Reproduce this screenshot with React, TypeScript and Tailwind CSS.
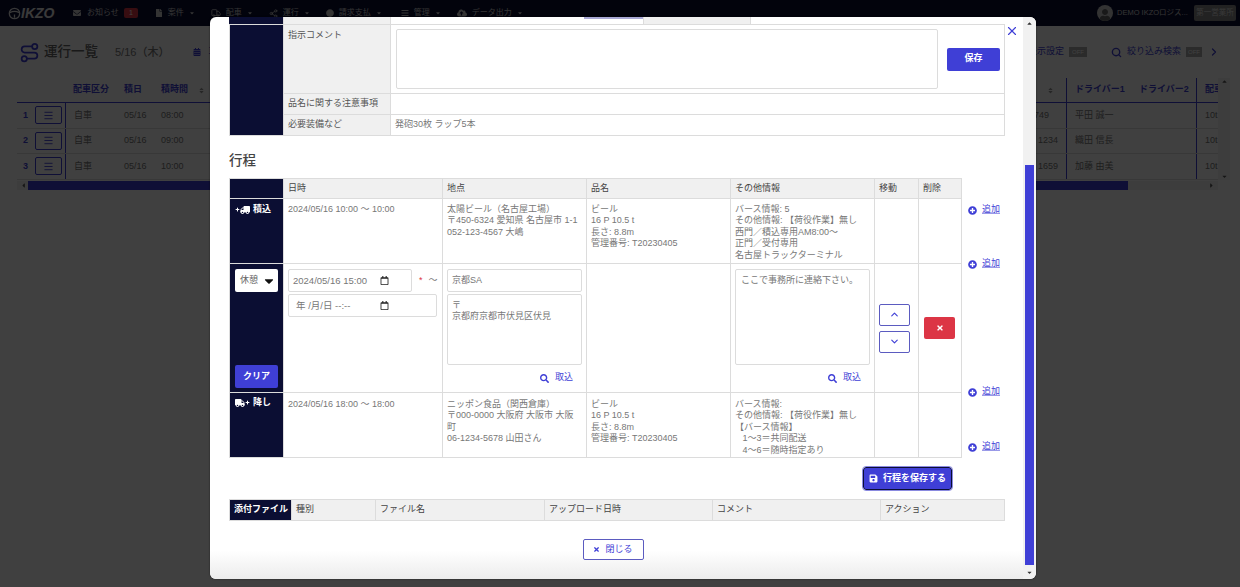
import React from "react";
import { Truck, Share2, Menu, ChevronDown, ChevronUp, ChevronRight, Search, X, Plus, Route } from "lucide-react";
import { FaCaretDown, FaCaretUp, FaCaretLeft, FaCaretRight, FaPlusCircle, FaTruck, FaSave, FaTimes, FaUser, FaBars, FaRegCalendar, FaSearch, FaFile, FaEnvelope, FaCircle, FaCloudUploadAlt, FaCalendarAlt, FaSort } from "react-icons/fa";

const font = "[font-family:'Liberation_Sans','Noto_Sans_CJK_JP',sans-serif]";

const nav = [
  { icon: <FaFile size={8} />, label: "案件", cls: "" },
  { icon: <Truck size={10} />, label: "配車", cls: "" },
  { icon: <Share2 size={9} />, label: "運行", cls: "" },
  { icon: <FaCircle size={8} />, label: "請求支払", cls: "mr-[3px]" },
  { icon: <FaBars size={8} />, label: "管理", cls: "" },
  { icon: <FaCloudUploadAlt size={10} />, label: "データ出力", cls: "" },
];

const bgRows = [
  { n: 1, t: "08:00", num: "749", d: "平田 誠一", pr: "pr-[17px]" },
  { n: 2, t: "09:00", num: "1234", d: "織田 信長", pr: "pr-[8px]" },
  { n: 3, t: "10:00", num: "1659", d: "加藤 由美", pr: "pr-[8px]" },
];

function Background() {
  return (
    <div className="bg-white text-[#777777]">
      <header className="h-[26px] bg-[#0b0e33] flex items-center text-[#cfcfcf] text-[8px]">
        <div className="ml-[8px] w-[46px] flex items-center gap-[0px]">
          <svg width="13" height="13" viewBox="0 0 14 14" fill="none" stroke="#ddd" strokeWidth="1.4" className="shrink-0"><circle cx="7" cy="7" r="5.6" /><path d="M2 6c3-1.6 7-1.6 10 0M7 8v3.5" /></svg>
          <span className="text-[14px] leading-none font-bold italic text-[#e6e6e6]">IKZO</span>
        </div>
        <div className="ml-[19px] flex items-center gap-[4px]">
          <FaEnvelope size={8} />
          <span className="ml-[2px]">お知らせ</span>
          <span className="ml-[1px] w-[14px] h-[10px] rounded-[2px] bg-[#dc3545] text-white text-[7px] flex items-center justify-center">1</span>
        </div>
        <nav className="ml-[17px] flex items-center gap-[16px]">
          {nav.map((n) => (
            <div key={n.label} className={`flex items-center gap-[5px] ${n.cls}`}>
              {n.icon}
              <span>{n.label}</span>
              <FaCaretDown size={6} />
            </div>
          ))}
        </nav>
        <div className="ml-auto flex items-center">
          <span className="w-[16px] h-[16px] rounded-full bg-[#cccccc] flex items-end justify-center overflow-hidden text-[#666666]"><FaUser size={12} /></span>
          <span className="ml-[4px] text-[7.5px] w-[72px] whitespace-nowrap">DEMO IKZOロジス...</span>
          <span className="ml-[5px] mr-[4px] w-[42px] h-[16px] bg-[#888888] rounded-[2px] text-[7.5px] flex items-center justify-center text-[#dddddd]">第一営業所</span>
        </div>
      </header>

      <div className="h-[52px] pl-[19px] pr-[20px] flex items-center text-[#777777]">
        <Route size={21} className="text-[#3f3fd6]" />
        <span className="ml-[4px] text-[13.5px] font-medium text-[#666666]">運行一覧</span>
        <span className="ml-[17px] text-[11px] font-medium">5/16（木）</span>
        <FaCalendarAlt size={8} className="ml-[24px] text-[#3f3fd6]" />
        <span className="ml-[7px] text-[9px] text-[#3f3fd6]">車</span>
        <div className="ml-auto flex items-center text-[9px] text-[#3f3fd6]">
          <span>表示設定</span>
          <span className="ml-[5px] w-[18px] h-[10px] bg-[#aaaaaa] text-white text-[6px] flex items-center justify-center">OFF</span>
          <Search size={11} className="ml-[24px]" strokeWidth={3} />
          <span className="ml-[5px]">絞り込み検索</span>
          <span className="ml-[5px] w-[16px] h-[10px] bg-[#aaaaaa] text-white text-[6px] flex items-center justify-center">OFF</span>
          <ChevronRight size={12} className="ml-[6px]" strokeWidth={2.5} />
        </div>
      </div>

      <div className="ml-[17px] w-[1213px] flex">
        <div className="flex-1 min-w-0">
          <div className="h-[25px] flex items-center text-[9px] font-bold text-[#3f3fd6] border-b border-[#3f3fd6]">
            <div className="w-[56px]" />
            <div className="w-[51px]">配車区分</div>
            <div className="w-[37px]">積日</div>
            <div className="w-[37px]">積時間</div>
            <FaSort size={7} className="text-[#999999]" />
            <div className="flex-1" />
            <FaSort size={7} className="mr-[12px] text-[#999999]" />
            <div className="w-[65px] h-full flex items-center pl-[8px] border-l border-[#3f3fd6] whitespace-nowrap">ドライバー1</div>
            <div className="w-[65px] whitespace-nowrap pl-[8px]">ドライバー2</div>
            <div className="w-[22px] h-full flex items-center pl-[8px] border-l border-[#3f3fd6] overflow-hidden whitespace-nowrap">配車</div>
          </div>
          {bgRows.map((r) => (
            <div key={r.n} className="h-[25.5px] flex items-center text-[9px] border-b border-[#dddddd]">
              <div className="w-[49px] h-full flex items-center border-r border-[#3f3fd6] text-[#3f3fd6] font-bold">
                <span className="ml-[6px] w-[12px]">{r.n}</span>
                <span className="w-[27px] h-[18px] rounded-[2px] border border-[#3f3fd6] flex items-center justify-center"><Menu size={11} /></span>
              </div>
              <div className="w-[58px] pl-[8px]">自車</div>
              <div className="w-[37px]">05/16</div>
              <div className="w-[37px]">{r.t}</div>
              <div className={`flex-1 text-right ${r.pr}`}>{r.num}</div>
              <div className="w-[65px] h-full flex items-center pl-[8px] border-l border-[#3f3fd6] whitespace-nowrap">{r.d}</div>
              <div className="w-[65px]" />
              <div className="w-[22px] h-full flex items-center pl-[8px] border-l border-[#3f3fd6] overflow-hidden whitespace-nowrap">10t</div>
            </div>
          ))}
          <div className="mt-[1px] h-[9px] bg-[#f1f1f1] flex items-center text-[#555555]">
            <FaCaretLeft size={7} className="ml-[3px]" />
            <div className="ml-[1px] h-full w-[1100px] bg-[#3f3fd6]" />
            <FaCaretRight size={7} className="ml-auto mr-[3px]" />
          </div>
        </div>
        <div className="w-[12px] h-[102px] bg-[#f1f1f1] flex flex-col items-center justify-between text-[#555555]">
          <FaCaretUp size={7} />
          <FaCaretDown size={7} />
        </div>
      </div>
    </div>
  );
}

const th = "border border-[#dcdcdc] bg-[#f0f0f0] px-[4px] text-left font-normal text-[#444444]";
const cell = "border border-[#dcdcdc] text-[#777777]";
const td = `${cell} px-[4px] pt-[5px] pb-0 align-top`;
const td3 = `${cell} px-[4px] pt-[6px] pb-0 align-top`;
const navy = "bg-[#0b0e33] border border-[#dcdcdc] text-white font-bold";
const field = "border border-[#dcdcdc] rounded-[2px] bg-white text-[#777777]";

function Pick() {
  return (
    <div className="flex justify-end items-center mt-[7px] h-[12px] pr-[9px] text-[#3f3fd6]">
      <FaSearch size={9} />
      <span className="ml-[6px]">取込</span>
    </div>
  );
}

function DateField({ text, cls, icon }: { text: string; cls: string; icon: string }) {
  return (
    <div className={`${field} ${cls} h-[23px] flex items-center text-[9.5px]`}>
      <span className="whitespace-nowrap">{text}</span>
      <FaRegCalendar size={9} className={`ml-auto ${icon} text-[#222222]`} />
    </div>
  );
}

function AddLink({ cls }: { cls: string }) {
  return (
    <div className={`${cls} h-[12px] flex items-center text-[#3f3fd6] whitespace-nowrap`}>
      <FaPlusCircle size={9} />
      <span className="ml-[5px] underline decoration-[#9a9ae8]">追加</span>
    </div>
  );
}

function Modal() {
  return (
    <div className="absolute left-[210px] top-[17px] w-[826px] h-[562px] rounded-[6px] bg-white overflow-hidden flex shadow-[0_0_2px_rgba(0,0,0,0.6)] text-[9px] leading-[11.4px]">
      <div className="flex-1 min-w-0 flex flex-col relative">
        <div className="pl-[19px] pr-[18px] flex-1 min-h-0">
          <div className="h-[7px] flex text-[0px]">
            <div className="w-[54px] bg-[#0b0e33]" />
            <div className="w-[107px] bg-[#f0f0f0] border-l border-[#dcdcdc]" />
            <div className="w-[194px] border-l border-[#dcdcdc]" />
            <div className="w-[59px] border-t-2 border-[#a9a9d6]" />
            <div className="w-[108px] bg-[#f0f0f0] border-x border-[#dcdcdc]" />
          </div>
          <table className="w-[776px] table-fixed border-collapse">
            <colgroup>
              <col className="w-[54px]" />
              <col className="w-[107px]" />
              <col />
            </colgroup>
            <tbody>
              <tr className="h-[69px]">
                <td rowSpan={3} className={navy} />
                <td className={`${th} align-top pt-[5px] text-[#555555]`}>指示コメント</td>
                <td className="border border-[#dcdcdc] pl-[5px] py-[4px] pr-0">
                  <div className="flex items-center">
                    <div className={`${field} shrink-0 w-[542px] h-[60px]`} />
                    <div className="shrink-0 ml-[9px] w-[53px] h-[23px] rounded-[2px] bg-[#3f3fd6] text-white font-bold flex items-center justify-center">保存</div>
                  </div>
                </td>
              </tr>
              <tr className="h-[21px]">
                <td className={`${th} text-[#555555]`}>品名に関する注意事項</td>
                <td className="border border-[#dcdcdc]" />
              </tr>
              <tr className="h-[21px]">
                <td className={`${th} text-[#555555]`}>必要装備など</td>
                <td className="border border-[#dcdcdc] px-[4px] text-[#777777]">発砲30枚 ラップ5本</td>
              </tr>
            </tbody>
          </table>

          <h2 className="mt-[16px] mb-[8px] h-[18px] text-[13.5px] leading-[18px] font-medium text-[#444444]">行程</h2>

          <div className="flex">
            <table className="w-[732px] table-fixed border-collapse">
              <colgroup>
                <col className="w-[54px]" />
                <col className="w-[159px]" />
                <col className="w-[144px]" />
                <col className="w-[144px]" />
                <col className="w-[144px]" />
                <col className="w-[44px]" />
                <col className="w-[43px]" />
              </colgroup>
              <tbody>
                <tr className="h-[20px]">
                  <td className={navy} />
                  <td className={th}>日時</td>
                  <td className={th}>地点</td>
                  <td className={th}>品名</td>
                  <td className={th}>その他情報</td>
                  <td className={th}>移動</td>
                  <td className={th}>削除</td>
                </tr>
                <tr className="h-[65px]">
                  <td className={`${navy} align-top pt-[5px] pl-[5px]`}>
                    <div className="flex items-center">
                      <Plus size={5} strokeWidth={5} />
                      <FaTruck size={10} className="-scale-x-100" />
                      <span className="ml-[3px]">積込</span>
                    </div>
                  </td>
                  <td className={td}>2024/05/16 10:00 〜 10:00</td>
                  <td className={td}>太陽ビール（名古屋工場）<br />〒450-6324 愛知県 名古屋市 1-1<br />052-123-4567 大嶋</td>
                  <td className={td}>ビール<br />16 P 10.5 t<br />長さ: 8.8m<br />管理番号: T20230405</td>
                  <td className={td}>バース情報: 5<br />その他情報: 【荷役作業】無し<br />西門／積込専用AM8:00〜<br />正門／受付専用<br />名古屋トラックターミナル</td>
                  <td className={td} />
                  <td className={td} />
                </tr>
                <tr className="h-[128px]">
                  <td className={`${navy} align-top px-[5px] pt-[5px] pb-[4px]`}>
                    <div className="h-[119px] flex flex-col justify-between font-normal">
                      <div className="h-[23px] rounded-[2px] bg-white text-[#666666] flex items-center pl-[5px]">
                        <span>休憩</span>
                        <FaCaretDown size={14} className="ml-[4px] text-[#111111]" />
                      </div>
                      <div className="h-[23px] rounded-[2px] bg-[#3f3fd6] text-white font-bold flex items-center justify-center">クリア</div>
                    </div>
                  </td>
                  <td className={td}>
                    <div className="flex items-center">
                      <DateField text="2024/05/16 15:00" cls="w-[124px] pl-[4px]" icon="mr-[22px]" />
                      <span className="ml-[7px] text-[#dc3545]">*</span>
                      <span className="ml-[6px]">〜</span>
                    </div>
                    <div className="mt-[2px]">
                      <DateField text="年 /月/日 --:--" cls="w-[149px] pl-[7px]" icon="mr-[47px]" />
                    </div>
                  </td>
                  <td className={td}>
                    <div className={`${field} h-[23px] flex items-center pl-[4px]`}>京都SA</div>
                    <div className={`${field} mt-[2px] h-[71px] pl-[4px] pt-[5px]`}>〒<br />京都府京都市伏見区伏見</div>
                    <Pick />
                  </td>
                  <td className={td} />
                  <td className={td}>
                    <div className={`${field} h-[96px] pl-[5px] pt-[5px]`}>ここで事務所に連絡下さい。</div>
                    <Pick />
                  </td>
                  <td className={`${cell} px-[4px] align-middle`}>
                    <div className="flex flex-col gap-[5px]">
                      <div className="w-[31px] h-[22px] rounded-[2px] border border-[#5b5bc0] text-[#3f3fd6] flex items-center justify-center"><ChevronUp size={11} strokeWidth={2.5} /></div>
                      <div className="w-[31px] h-[22px] rounded-[2px] border border-[#5b5bc0] text-[#3f3fd6] flex items-center justify-center"><ChevronDown size={11} strokeWidth={2.5} /></div>
                    </div>
                  </td>
                  <td className={`${cell} px-[5px] align-middle`}>
                    <div className="w-[31px] h-[22px] rounded-[2px] bg-[#dc3545] text-white flex items-center justify-center"><FaTimes size={8} /></div>
                  </td>
                </tr>
                <tr className="h-[65px]">
                  <td className={`${navy} align-top pt-[4px] pl-[5px]`}>
                    <div className="flex items-center">
                      <FaTruck size={10} />
                      <Plus size={5} strokeWidth={5} />
                      <span className="ml-[3px]">降し</span>
                    </div>
                  </td>
                  <td className={td3}>2024/05/16 18:00 〜 18:00</td>
                  <td className={td3}>ニッポン食品（関西倉庫）<br />〒000-0000 大阪府 大阪市 大阪町<br />06-1234-5678 山田さん</td>
                  <td className={td3}>ビール<br />16 P 10.5 t<br />長さ: 8.8m<br />管理番号: T20230405</td>
                  <td className={td3}>バース情報:<br />その他情報: 【荷役作業】無し<br />【バース情報】<br />&nbsp;&nbsp;&nbsp;1〜3＝共同配送<br />&nbsp;&nbsp;&nbsp;4〜6＝随時指定あり</td>
                  <td className={td3} />
                  <td className={td3} />
                </tr>
              </tbody>
            </table>
            <div className="ml-[6px] flex flex-col">
              <AddLink cls="mt-[26px]" />
              <AddLink cls="mt-[42px]" />
              <AddLink cls="mt-[116px]" />
              <AddLink cls="mt-[43px]" />
            </div>
          </div>

          <div className="mt-[9px] h-[23px] w-[723px] flex justify-end">
            <div className="w-[89px] h-[23px] rounded-[3px] bg-[#3f3fd6] text-white font-bold flex items-center justify-center outline outline-[#8a8ae0] border border-[#0b0e33]">
              <FaSave size={9} />
              <span className="ml-[5px]">行程を保存する</span>
            </div>
          </div>

          <table className="mt-[9px] w-[776px] table-fixed border-collapse">
            <colgroup>
              <col className="w-[62px]" />
              <col className="w-[84px]" />
              <col className="w-[169px]" />
              <col className="w-[168px]" />
              <col className="w-[168px]" />
              <col />
            </colgroup>
            <tbody>
              <tr className="h-[21px]">
                <td className={`${navy} align-middle pl-[4px] whitespace-nowrap`}>添付ファイル</td>
                <td className={th}>種別</td>
                <td className={th}>ファイル名</td>
                <td className={th}>アップロード日時</td>
                <td className={th}>コメント</td>
                <td className={th}>アクション</td>
              </tr>
            </tbody>
          </table>
        </div>

        <div className="shrink-0 h-[57px] pt-[17px] pr-[7px] bg-gradient-to-b from-white from-50% to-[#ececec] flex justify-center">
          <div className="w-[61px] h-[21px] rounded-[2px] border border-[#5b5bc0] bg-white text-[#3f3fd6] flex items-center justify-center">
            <FaTimes size={7} />
            <span className="ml-[5px]">閉じる</span>
          </div>
        </div>

        <X size={14} strokeWidth={2} className="absolute left-[795px] top-[7px] text-[#3f3fd6]" />
      </div>

      <div className="w-[13px] bg-[#f1f1f1] flex flex-col items-center text-[#333333] pt-[3px] pb-[3px]">
        <FaCaretUp size={7} />
        <div className="w-[9px] h-[400px] mt-[138px] bg-[#3f3fd6]" />
        <FaCaretDown size={7} className="mt-auto" />
      </div>
    </div>
  );
}

export default function App() {
  return (
    <div className={`relative w-[1240px] h-[587px] overflow-hidden bg-white ${font}`}>
      <Background />
      <div className="absolute inset-0 bg-black/75" />
      <Modal />
    </div>
  );
}
